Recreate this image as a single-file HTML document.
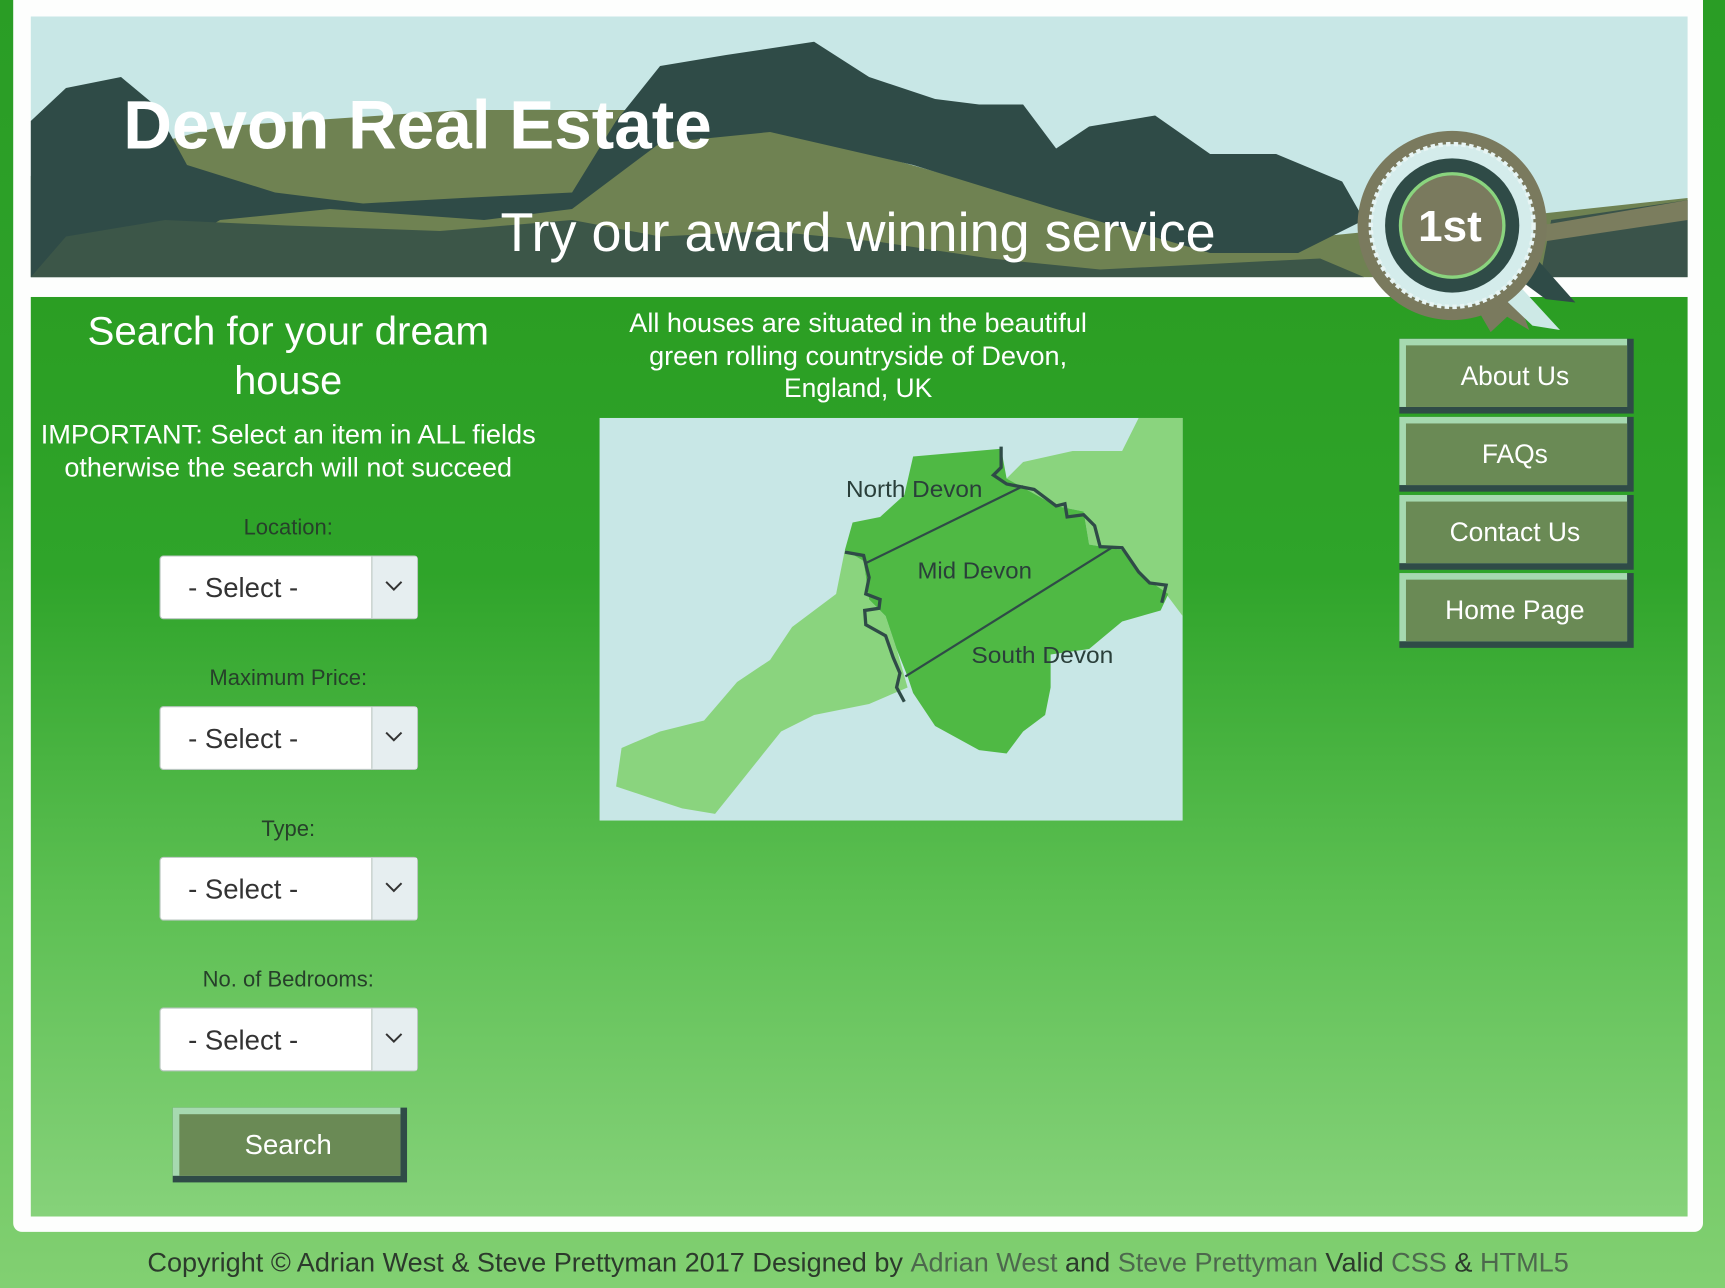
<!DOCTYPE html>
<html><head><meta charset="utf-8"><style>
html,body{margin:0;padding:0;width:1725px;height:1288px;overflow:hidden;background:#2a9d25}
svg{display:block}
text{font-family:"Liberation Sans",sans-serif}
</style></head><body>
<svg width="1725" height="1288" viewBox="0 0 1568 1171" preserveAspectRatio="none" xmlns="http://www.w3.org/2000/svg">
<defs>
<linearGradient id="bg" x1="0" y1="0" x2="0" y2="1">
<stop offset="0" stop-color="#2a9d25"/><stop offset="0.35" stop-color="#2fa32a"/><stop offset="0.7" stop-color="#5ec055"/><stop offset="1" stop-color="#82d072"/>
</linearGradient>
<linearGradient id="pn" x1="0" y1="0" x2="0" y2="1">
<stop offset="0" stop-color="#2b9e23"/><stop offset="0.3" stop-color="#2fa42a"/><stop offset="0.65" stop-color="#5cbf52"/><stop offset="1" stop-color="#86d27a"/>
</linearGradient>
</defs>
<rect x="0" y="0" width="1568" height="1171" fill="url(#bg)"/>
<rect x="12" y="-10" width="1536" height="1130" rx="8" fill="#fdfefd"/>
<!-- header -->
<rect x="28" y="15" width="1506" height="237" fill="#c8e7e6"/>
<path d="M28,252 L28,160 L200,115 L420,100 L650,100 L900,170 L1100,225 L1300,205 L1534,180 L1534,252 Z" fill="#6f8252"/>
<path d="M28,252 L28,110 L60,80 L110,70 L140,95 L170,150 L250,175 L330,185 L420,180 L520,175 L560,110 L600,60 L660,50 L740,38 L790,70 L850,90 L890,95 L930,95 L960,135 L990,115 L1050,105 L1100,140 L1160,140 L1220,165 L1240,200 L1180,230 L1100,230 L960,190 L830,150 L700,120 L600,130 L520,190 L440,200 L300,190 L200,200 L150,230 L100,252 Z" fill="#2f4b47"/>
<path d="M28,252 L60,215 L150,200 L260,205 L400,210 L520,200 L600,215 L700,210 L800,220 L900,235 L1000,245 L1100,240 L1200,235 L1240,252 Z" fill="#3c5648"/>
<path d="M1400,252 L1410,200 L1534,182 L1534,252 Z" fill="#3a534a"/>
<path d="M1400,205 L1534,182 L1534,200 L1400,220 Z" fill="#7b7d5e"/>
<text x="112" y="135" font-size="62" font-weight="bold" fill="#fff" textLength="535" lengthAdjust="spacingAndGlyphs">Devon Real Estate</text>
<text x="455" y="228" font-size="50" fill="#fff" textLength="650" lengthAdjust="spacingAndGlyphs">Try our award winning service</text>
<!-- panel -->
<rect x="28" y="270" width="1506" height="836" fill="url(#pn)"/>
<!-- rosette -->
<polygon points="1325,250 1368,240 1390,300 1370,288 1355,302" fill="#7a7a5e"/>
<polygon points="1355,235 1385,222 1432,275 1405,272" fill="#2f4b47"/>
<polygon points="1350,255 1372,250 1418,300 1393,296" fill="#cde9e6"/>
<circle cx="1320" cy="205" r="86" fill="#7a7a5e"/>
<circle cx="1320" cy="205" r="74" fill="#d4eceb" stroke="#e8f5f4" stroke-width="4" stroke-dasharray="4 3"/>
<circle cx="1320" cy="205" r="61" fill="#2f4b47"/>
<circle cx="1320" cy="205" r="47" fill="#7a7a5e" stroke="#8ad47e" stroke-width="3"/>
<text x="1318" y="219" font-size="40" font-family="Liberation Serif,serif" fill="#fff" text-anchor="middle" font-weight="bold">1st</text>
<!-- left column -->
<g fill="#fff" text-anchor="middle">
<text x="262" y="313" font-size="36" textLength="365" lengthAdjust="spacingAndGlyphs">Search for your dream</text>
<text x="262" y="358" font-size="36">house</text>
<text x="262" y="403" font-size="24.5" textLength="450" lengthAdjust="spacingAndGlyphs">IMPORTANT: Select an item in ALL fields</text>
<text x="262" y="433" font-size="24.5" textLength="407" lengthAdjust="spacingAndGlyphs">otherwise the search will not succeed</text>
</g>
<g fill="#26402a" text-anchor="middle" font-size="20">
<text x="262" y="486">Location:</text>
<text x="262" y="623">Maximum Price:</text>
<text x="262" y="760">Type:</text>
<text x="262" y="897">No. of Bedrooms:</text>
</g>
<g id="sel">
<rect x="145.5" y="505.5" width="234" height="57" rx="3" fill="#fff" stroke="#b9c6c0"/>
<rect x="338" y="506" width="41" height="56" fill="#e6eef0"/>
<line x1="338" y1="506" x2="338" y2="562" stroke="#b9c6c0"/>
<polyline points="351,529 358,536 365,529" fill="none" stroke="#333" stroke-width="1.8"/>
<text x="171" y="543" font-size="25" fill="#333">- Select -</text>
</g>
<use href="#sel" y="137"/>
<use href="#sel" y="274"/>
<use href="#sel" y="411"/>
<!-- search button -->
<g id="btn">
<rect x="157" y="1007" width="213" height="68" fill="#2f4b47"/>
<rect x="157" y="1007" width="207" height="62" fill="#a6d9b0"/>
<rect x="163" y="1013" width="201" height="56" fill="#6a8a55"/>
</g>
<text x="262" y="1049" font-size="25" fill="#fff" text-anchor="middle">Search</text>
<!-- middle -->
<g fill="#fff" text-anchor="middle" font-size="24">
<text x="780" y="302" textLength="416" lengthAdjust="spacingAndGlyphs">All houses are situated in the beautiful</text>
<text x="780" y="332" textLength="380" lengthAdjust="spacingAndGlyphs">green rolling countryside of Devon,</text>
<text x="780" y="361">England, UK</text>
</g>
<!-- map -->
<rect x="545" y="380" width="530" height="366" fill="#c8e7e6"/>
<path d="M1035,380 L1075,380 L1075,560 L1060,540 L1040,525 L1020,500 L990,495 L985,465 L960,460 L915,435 L930,420 L975,410 L1020,410 Z" fill="#8ad47e"/>
<path d="M768,500 L785,510 L790,545 L805,560 L815,590 L825,625 L790,640 L740,650 L710,665 L690,690 L670,715 L650,740 L620,735 L590,725 L560,715 L565,680 L600,665 L640,655 L670,620 L700,600 L720,570 L760,540 Z" fill="#8ad47e"/>
<path d="M830,415 L910,408 L915,435 L960,460 L985,465 L990,495 L1020,500 L1040,525 L1062,540 L1055,555 L1020,565 L990,590 L955,595 L955,625 L950,650 L930,665 L915,685 L890,682 L850,660 L830,630 L825,615 L815,590 L805,560 L790,545 L785,510 L768,500 L775,475 L800,470 L822,450 Z" fill="#4fb944"/>
<path d="M910,406 L910,425 L903,432 L915,440 L940,445 L960,460 L968,458 L970,470 L985,468 L995,478 L1000,497 L1020,498 L1035,520 L1045,530 L1060,532 L1056,548" fill="none" stroke="#2f4b47" stroke-width="3"/>
<path d="M768,502 L785,505 L790,525 L787,540 L800,545 L799,553 L786,555 L787,568 L805,578 L812,598 L818,612 L815,625 L822,638" fill="none" stroke="#2f4b47" stroke-width="3"/>
<line x1="787" y1="512" x2="930" y2="442" stroke="#2f4b47" stroke-width="2"/>
<line x1="823" y1="615" x2="1012" y2="497" stroke="#2f4b47" stroke-width="2"/>
<g fill="#2a3f3a" font-size="21">
<text x="769" y="452" textLength="124" lengthAdjust="spacingAndGlyphs">North Devon</text>
<text x="834" y="526" textLength="104" lengthAdjust="spacingAndGlyphs">Mid Devon</text>
<text x="883" y="603" textLength="129" lengthAdjust="spacingAndGlyphs">South Devon</text>
</g>
<!-- nav -->
<use href="#btn" x="1115" y="-699"/>
<use href="#btn" x="1115" y="-628"/>
<use href="#btn" x="1115" y="-557"/>
<use href="#btn" x="1115" y="-486"/>
<g fill="#fff" font-size="24" text-anchor="middle">
<text x="1377" y="350">About Us</text>
<text x="1377" y="421">FAQs</text>
<text x="1377" y="492">Contact Us</text>
<text x="1377" y="563">Home Page</text>
</g>
<!-- footer -->
<text x="134" y="1156" font-size="24" fill="#2c3a2c" textLength="1292" lengthAdjust="spacingAndGlyphs">Copyright © Adrian West &amp; Steve Prettyman 2017 Designed by <tspan fill="#4d684d">Adrian West</tspan> and <tspan fill="#4d684d">Steve Prettyman</tspan> Valid <tspan fill="#4d684d">CSS</tspan> &amp; <tspan fill="#4d684d">HTML5</tspan></text>
</svg>
</body></html>
